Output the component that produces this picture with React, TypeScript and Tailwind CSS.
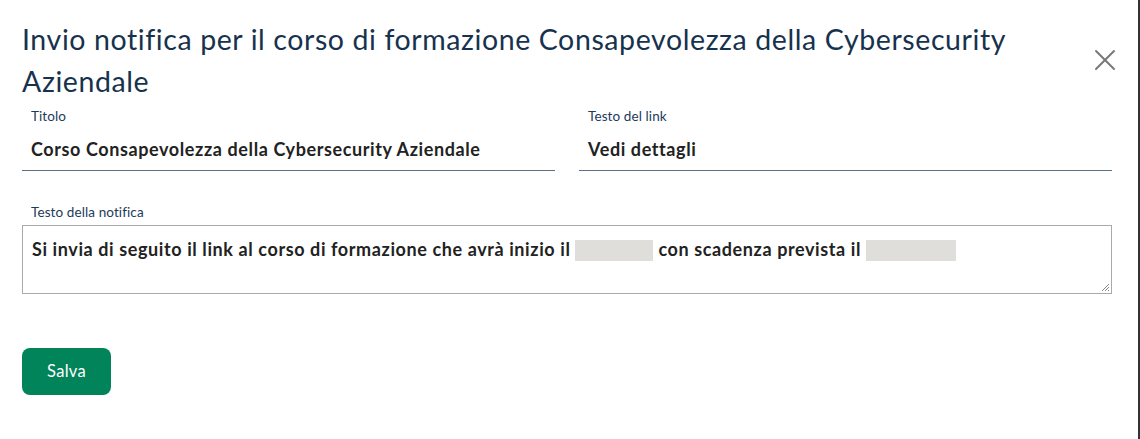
import { X } from 'lucide-react';

const font = { fontFamily: 'Lato, "Noto Sans", sans-serif' };

function Field({ label, value }: { label: string; value: string }) {
  return (
    <div className="flex flex-col">
      <label className="pl-[9px] text-[13.5px] leading-[16px] tracking-[0.1px] text-[#1d3a5a]">{label}</label>
      <div className="mt-[14px] border-b border-[#5b7186] pb-[10px] pl-[9px] text-[18px] font-bold leading-[22px] tracking-[0.6px] text-[#222]">
        {value}
      </div>
    </div>
  );
}

export default function App() {
  return (
    <div className="min-h-[439px] w-full border-r-2 border-[#333] bg-white" style={font}>
      <div className="flex items-start pl-[22px] pr-[15px] pt-[18px]">
        <h2 className="min-w-0 max-w-[1040px] flex-1 text-[28.5px] font-normal leading-[42px] tracking-[0.6px] text-[#17324d]">
          Invio notifica per il corso di formazione Consapevolezza della Cybersecurity Aziendale
        </h2>
        <button type="button" className="ml-auto mt-[24px] shrink-0 text-[#777]">
          <X className="h-[36px] w-[36px]" strokeWidth={1.3} />
        </button>
      </div>

      <div className="px-[22px] pr-[26px]">
        <div className="mt-[6px] grid grid-cols-2 gap-[24px]">
          <Field label="Titolo" value="Corso Consapevolezza della Cybersecurity Aziendale" />
          <Field label="Testo del link" value="Vedi dettagli" />
        </div>

        <div className="mt-[28px]">
          <label className="pl-[9px] text-[13.5px] leading-[16px] tracking-[0.1px] text-[#1d3a5a]">Testo della notifica</label>
          <div className="relative mt-[2px] h-[69px] border border-[#aaa] px-[9px] pt-[12px] text-[18px] font-bold leading-[22px] tracking-[0.6px] text-[#222]">
            Si invia di seguito il link al corso di formazione che avrà inizio il{' '}
            <span className="inline-block h-[21px] w-[78px] bg-[#dfdedb] align-[-5px]" />{' '}
            con scadenza prevista il{' '}
            <span className="inline-block h-[21px] w-[90px] bg-[#dfdedb] align-[-5px]" />
            <svg className="absolute bottom-[1px] right-[1px]" width="9" height="9" viewBox="0 0 9 9">
              <path d="M8 1L1 8M8 4L4 8M8 7L7 8" stroke="#888" strokeWidth="1" />
            </svg>
          </div>
        </div>

        <button type="button" className="mt-[54px] h-[47px] w-[89px] rounded-[8px] bg-[#01845a] text-[16.5px] font-normal tracking-[0.3px] text-white">
          Salva
        </button>
      </div>
    </div>
  );
}
